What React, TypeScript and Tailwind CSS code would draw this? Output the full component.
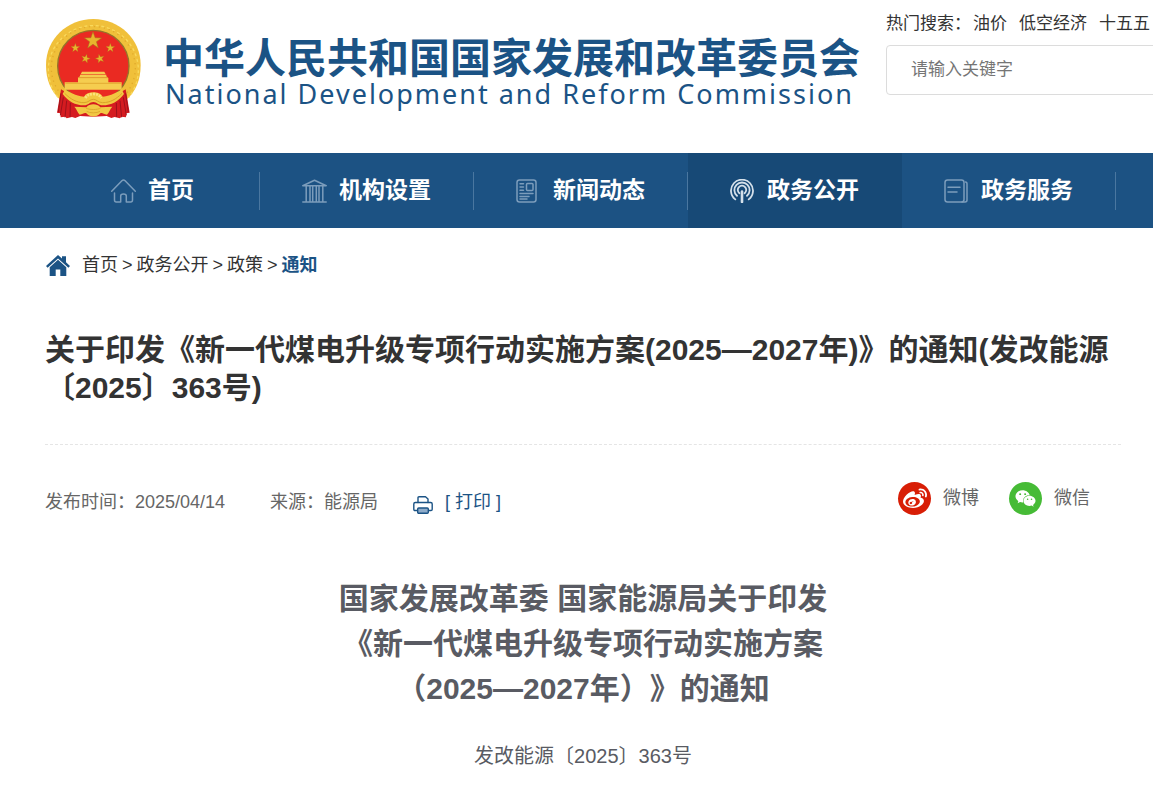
import type { ReactNode } from "react";
import { FaWeibo, FaWeixin } from "react-icons/fa";

const STAR = "0,-10 2.4,-3.2 9.5,-3.1 3.8,1.2 5.9,8.1 0,4 -5.9,8.1 -3.8,1.2 -9.5,-3.1 -2.4,-3.2";

const Emblem = () => (
  <svg viewBox="27 24 288 303" className="h-[101px] w-24 shrink-0" aria-hidden="true">
    <path d="M172 27c78 0 142 60 142 138 0 44-14 78-44 106l-98 30-98-30c-30-28-44-62-44-106C30 87 94 27 172 27z" fill="#f0c03a" />
    <g fill="none" strokeWidth="4">
      <path d="M66 262A135 133 0 1 1 278 262" stroke="#f9d95c" strokeDasharray="9 8" />
      <path d="M76 254A126 124 0 1 1 268 254" stroke="#e0aa2c" strokeDasharray="4 11" />
    </g>
    <circle cx="172" cy="168" r="107" fill="#ea2a22" stroke="#94742a" strokeWidth="4" />
    <g fill="#e8b52d" stroke="#a8741c" strokeWidth=".6">
      <polygon points={STAR} transform="translate(171 92) scale(2.7)" />
      <polygon points={STAR} transform="translate(118 114) scale(1.4)" />
      <polygon points={STAR} transform="translate(223 114) scale(1.4)" />
      <polygon points={STAR} transform="translate(149 146) rotate(15) scale(1.4)" />
      <polygon points={STAR} transform="translate(192 146) rotate(-15) scale(1.4)" />
    </g>
    <g fill="#f5cd4f">
      <path d="M138 185h67l4 8h-75z" />
      <path d="M132 194h79v5l6 4h-92l7-4z" />
      <path d="M126 204h91v13h40v22H86v-22h40z" />
    </g>
    <path d="M128 203h88M88 220h168" stroke="#d99d26" strokeWidth="2" />
    {/* red drapery with a gold sash across it */}
    <path
      d="M75 238c30 20 60 28 97 28s67-8 97-28l12 70-10 2-1 12-14-2-4 5-16-4-10 3-14-6-40 2-40-2-14 6-10-3-16 4-4-5-14 2-1-12-10-2z"
      fill="#d51b20"
    />
    <g fill="none" stroke="#9c121b" strokeWidth="3">
      <path d="M82 262l-9 54M92 272l-5 50M103 279l-1 42M75 250l-8 56" />
      <path d="M262 262l9 54M252 272l5 50M241 279l1 42M269 250l8 56" />
    </g>
    <path
      d="M86 240c18 6 30 18 58 20 6-10 16-13 28-13s22 3 28 13c28-2 40-14 58-20l6 12c-16 22-38 34-64 34-13 0-17-10-28-10s-15 10-28 10c-26 0-48-12-64-34z"
      fill="#f2c741"
    />
    <path d="M148 264c5-9 13-12 24-12s19 3 24 12" fill="none" stroke="#fbe27c" strokeWidth="8" strokeDasharray="6 3" />
    <path d="M86 250c18 18 36 28 58 28 14 0 17-10 28-10s14 10 28 10c22 0 40-10 58-28" fill="none" stroke="#dba32a" strokeWidth="3" />
    <path d="M115 290l36 2c6-7 12-9 21-9s15 2 21 9l36-2c-8 8-8 16-16 24-10-2-14-7-20-4-12 13-30 13-42 0-6-3-10 2-20 4-8-8-8-16-16-24z" fill="#f2c844" />
    <path d="M150 294c8 6 36 6 44 0M152 304c8 6 32 6 40 0" fill="none" stroke="#dba32a" strokeWidth="2.5" />
  </svg>
);

const iconProps = {
  fill: "none",
  stroke: "currentColor",
  strokeWidth: 1.5,
  strokeLinecap: "round",
  strokeLinejoin: "round",
  "aria-hidden": true,
} as const;

const HomeIcon = () => (
  <svg viewBox="0 0 25 24" className="h-6 w-[25px]" {...iconProps}>
    <path d="M.7 12.2L10.9 1.7q1.6-1.5 3.2 0l10.2 10.5M3.5 14v7q0 2 1.8 2h4.4v-6q0-2 2.8-2t2.8 2v6h4.4q1.8 0 1.8-2v-7" />
  </svg>
);

const BankIcon = () => (
  <svg viewBox="0 0 25 24" className="h-6 w-[25px]" {...iconProps}>
    <path d="M.8 6.8L12.5 1.2l11.7 5.6zM.8 23h23.4M4.2 7v16M8 7v16M10.7 7v16M14.3 7v16M17 7v16M20.8 7v16" />
  </svg>
);

const NewsIcon = () => (
  <svg viewBox="0 0 25 24" className="h-6 w-[25px]" {...iconProps}>
    <rect x="1" y="1" width="19" height="22" rx="2.5" />
    <rect x="10.5" y="4.5" width="6.5" height="7" rx="1" />
    <path d="M4 4.8h3.5M4 8h3.5M4 11.2h3.5M4 14.5h13M4 17.5h9M4 20h7" />
  </svg>
);

const BroadcastIcon = () => (
  <svg viewBox="0 0 25 24" className="h-6 w-[25px]" {...iconProps} strokeWidth={1.8}>
    <path d="M5.3 20.4a11 11 0 1 1 13.4 0M7 16.8a7.6 7.6 0 1 1 10 0M9.4 14.2a4.2 4.2 0 1 1 5.2 0" />
    <path d="M12 12.5V23" strokeWidth="2.6" />
  </svg>
);

const DocIcon = () => (
  <svg viewBox="0 0 25 24" className="h-6 w-[25px]" {...iconProps}>
    <rect x="1" y="1" width="19" height="22" rx="2.5" />
    <path d="M4 8.2h12M4 13h9M21.5 3q1.5 0 1.5 2v16q0 2-2 2h-3" />
  </svg>
);

const CrumbHomeIcon = () => (
  <svg viewBox="0 0 24 21" className="mr-2 h-[21px] w-6" fill="#1b5385" aria-hidden="true">
    <path d="M12 0l4 3.6V1.3h4v6l4 3.7-1.6 1.8L12 3.4 1.6 12.8 0 11z" />
    <path d="M12 4.8l8.3 7.4V21h-6v-6.5H9.7V21h-6v-8.8z" />
  </svg>
);

const PrintIcon = () => (
  <svg viewBox="0 0 20 18" className="mt-1 h-[18px] w-5" {...iconProps} strokeWidth={1.4}>
    <path d="M5 6.5V1.8q0-1 1-1h6.5L15 3v3.5" />
    <path d="M4.5 14.5H2q-1.2 0-1.2-1.2V8q0-1.5 1.5-1.5h15.4q1.5 0 1.5 1.5v5.3q0 1.2-1.2 1.2h-2.5" />
    <rect x="4.7" y="12" width="10.6" height="5.2" rx="1" fill="#8facca" />
  </svg>
);

type NavItem = { label: string; icon: ReactNode; active?: boolean };

const navItems: NavItem[] = [
  { label: "首页", icon: <HomeIcon /> },
  { label: "机构设置", icon: <BankIcon /> },
  { label: "新闻动态", icon: <NewsIcon /> },
  { label: "政务公开", icon: <BroadcastIcon />, active: true },
  { label: "政务服务", icon: <DocIcon /> },
];

const Header = () => (
  <header className="flex h-[153px] items-start overflow-hidden pl-[45px]">
    <a href="#home" className="flex shrink-0 items-start pt-[18px] text-[#1b5385]">
      <Emblem />
      <div className="ml-[22px] pt-[18px]">
        <div className="text-[41px] leading-[46px] font-bold whitespace-nowrap">中华人民共和国国家发展和改革委员会</div>
        <div className="ml-0.5 font-['Noto_Sans','Open_Sans',sans-serif] text-[27px] leading-6 tracking-[2px] whitespace-nowrap">
          National Development and Reform Commission
        </div>
      </div>
    </a>
    <form className="ml-[26px] w-[400px] shrink-0 pt-3">
      <div className="flex gap-3 text-[17px] leading-6">
        <span className="-mr-2.5">热门搜索：</span>
        <a href="#oil">油价</a>
        <a href="#low-altitude">低空经济</a>
        <a href="#plan">十五五</a>
      </div>
      <input
        type="text"
        aria-label="搜索"
        placeholder="请输入关键字"
        className="mt-[9px] block h-[50px] w-full rounded border border-[#dcdcdc] px-6 text-[17px] placeholder:text-[#757575]"
      />
    </form>
  </header>
);

const Nav = () => (
  <nav className="flex h-[75px] overflow-hidden bg-[#1c5283] pl-[46px]">
    {navItems.map(({ label, icon, active }) => (
      <a
        key={label}
        href="#nav"
        className={`flex w-[214px] shrink-0 items-center text-[23px] font-bold text-white ${active ? "bg-[#174976]" : ""}`}
      >
        <span
          className={`flex h-[38px] w-full items-center justify-center gap-3 border-r ${active ? "border-transparent" : "border-[#4a77a0]"}`}
        >
          <span className={active ? "text-[#d5e0ea]" : "text-[#7c9dbc]"}>{icon}</span>
          <span className="pb-0.5 leading-9">{label}</span>
        </span>
      </a>
    ))}
  </nav>
);

const Breadcrumb = () => (
  <div className="flex items-center gap-1 pt-6 pl-px text-[18px] leading-[26px]">
    <CrumbHomeIcon />
    <a href="#home">首页</a>
    <span>&gt;</span>
    <a href="#open">政务公开</a>
    <span>&gt;</span>
    <a href="#policy">政策</a>
    <span>&gt;</span>
    <a href="#notice" className="font-bold text-[#1b5385]">
      通知
    </a>
  </div>
);

const Meta = () => (
  <div className="flex items-start pt-[37px] pr-[31px] text-[18px] leading-[33px] text-[#666]">
    <div className="flex pt-1">
      <span>发布时间：2025/04/14</span>
      <span className="ml-[45px]">来源：能源局</span>
      <button type="button" className="ml-[35px] flex items-center gap-3 text-[#1b5385]">
        <PrintIcon />
        <span>[ 打印 ]</span>
      </button>
    </div>
    <div className="ml-auto flex gap-[30px]">
      <a href="#weibo" className="flex items-center gap-3">
        <span className="flex size-[33px] items-center justify-center rounded-full bg-[#d81e06] text-white">
          <FaWeibo className="size-6" />
        </span>
        微博
      </a>
      <a href="#weixin" className="flex items-center gap-3">
        <span className="flex size-[33px] items-center justify-center rounded-full bg-[#46bb36] text-white">
          <FaWeixin className="size-[21px]" />
        </span>
        微信
      </a>
    </div>
  </div>
);

const App = () => {
  return (
    <div className="bg-white font-['Liberation_Sans','Noto_Sans_CJK_SC',sans-serif] text-[#333] [text-spacing-trim:space-all]">
      <Header />
      <Nav />
      <main className="pr-8 pl-[45px]">
        <Breadcrumb />
        <h1 className="border-b border-dashed border-[#e5e5e5] pt-[53px] pb-[37px] text-[30px] leading-[38px] font-bold">
          关于印发《新一代煤电升级专项行动实施方案(2025—2027年)》的通知(发改能源〔2025〕363号)
        </h1>
        <Meta />
        <article className="pt-[57px] text-center text-[#595b63]">
          <h2 className="text-[30px] leading-[45px] font-bold">
            国家发展改革委 国家能源局关于印发
            <br />
            《新一代煤电升级专项行动实施方案
            <br />
            （2025—2027年）》的通知
          </h2>
          <p className="pt-[30px] text-xl leading-[30px]">发改能源〔2025〕363号</p>
        </article>
      </main>
    </div>
  );
};

export default App;
